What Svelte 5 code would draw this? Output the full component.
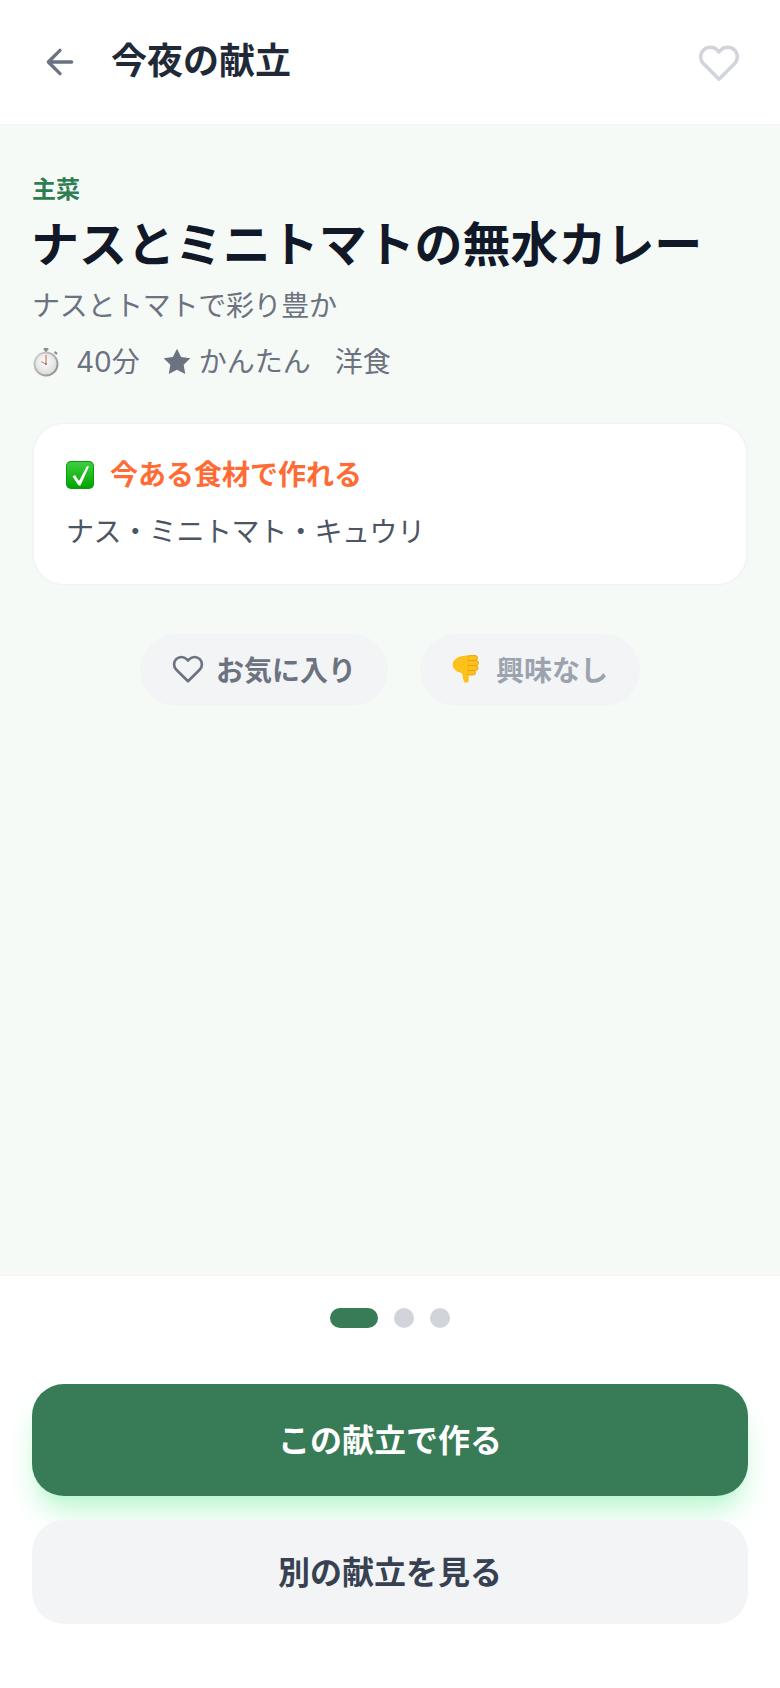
<script>
  const dots = [true, false, false];
</script>

<div class="page">
  <header class="top">
    <button class="icon-btn back" aria-label="戻る">
      <svg viewBox="0 0 24 24" width="40" height="40" class="arrow"><path d="M19 12H5M12 19l-7-7 7-7" /></svg>
    </button>
    <h1 class="top-title">今夜の献立</h1>
    <button class="icon-btn like" aria-label="お気に入り">
      <svg viewBox="0 0 24 24" width="42" height="42" class="heart-big"><path d="M20.84 4.61a5.5 5.5 0 0 0-7.78 0L12 5.67l-1.06-1.06a5.5 5.5 0 0 0-7.78 7.78l1.06 1.06L12 21.23l7.78-7.78 1.06-1.06a5.5 5.5 0 0 0 0-7.78z" /></svg>
    </button>
  </header>

  <main class="body">
    <div class="label">主菜</div>
    <h2 class="dish">ナスとミニトマトの無水カレー</h2>
    <p class="sub">ナスとトマトで彩り豊か</p>
    <div class="meta">
      <span class="meta-item">
        <svg class="watch" viewBox="0 0 28 32" width="28" height="32">
          <defs>
            <linearGradient id="wb" x1="0" y1="0" x2="1" y2="1"><stop offset="0" stop-color="#d8d8d8" /><stop offset="1" stop-color="#85888d" /></linearGradient>
            <radialGradient id="wf" cx="0.45" cy="0.4" r="0.7"><stop offset="0" stop-color="#ffffff" /><stop offset="1" stop-color="#d9d6d2" /></radialGradient>
          </defs>
          <rect x="11.5" y="2" width="5" height="2.600" rx="1" fill="#8a8d92" />
          <rect x="13" y="4" width="2" height="3" fill="#8a8d92" />
          <rect x="22" y="6" width="3.600" height="2.200" rx="1" fill="#8a8d92" transform="rotate(40 24 7)" />
          <circle cx="14" cy="18" r="12.500" fill="url(#wb)" />
          <circle cx="14" cy="18" r="10.500" fill="url(#wf)" />
          <path d="M14 18V9" stroke="#e2705c" stroke-width="1.200" />
          <path d="M14 18l-5-2.400" stroke="#8f8a85" stroke-width="1" />
          <circle cx="14" cy="18" r="1" fill="#8f6a60" />
        </svg>
        <span class="num">40分</span>
      </span>
      <span class="meta-item star-item">
        <svg viewBox="0 0 24 24" width="32" height="32" class="star"><path d="M12 2l3.090 6.260L22 9.270l-5 4.870 1.180 6.880L12 17.770l-6.180 3.250L7 14.140 2 9.270l6.910-1.010L12 2z" /></svg>
        <span>かんたん</span>
      </span>
      <span>洋食</span>
    </div>

    <section class="card">
      <div class="card-title">
        <svg viewBox="0 0 28 28" width="28" height="28">
          <defs>
            <linearGradient id="cb" x1="0" y1="0" x2="0" y2="1"><stop offset="0" stop-color="#3fcf3f" /><stop offset="1" stop-color="#00a400" /></linearGradient>
          </defs>
          <rect x="0" y="0" width="28" height="28" rx="5" fill="#0a9a12" />
          <rect x="1" y="1" width="26" height="26" rx="4.200" fill="url(#cb)" />
          <path d="M6.500 15.500L9 14l4 6L21 5l2 .5-8.500 19h-2z" fill="#fff" />
        </svg>
        <span>今ある食材で作れる</span>
      </div>
      <p class="card-text">ナス・ミニトマト・キュウリ</p>
    </section>

    <div class="actions">
      <button class="pill fav">
        <svg viewBox="0 0 24 24" width="32" height="32" class="heart-small"><path d="M20.84 4.61a5.5 5.5 0 0 0-7.78 0L12 5.67l-1.06-1.06a5.5 5.5 0 0 0-7.78 7.78l1.06 1.06L12 21.23l7.78-7.78 1.06-1.06a5.5 5.5 0 0 0 0-7.78z" /></svg>
        <span>お気に入り</span>
      </button>
      <button class="pill nope">
        <svg viewBox="0 0 28 30" width="28" height="30">
          <path d="M5 4C8 2 12 1.500 17 1.500V20h-.3v6c0 3-3.700 3.500-4.700 1.500-1-1.500-1-5.500-2-8-2-1.500-6-1.500-6.500-3.500C1 14.500 0 10 1 8.500 1.500 7 3 5 5 4z" fill="#fcc21b" />
          <g fill="#fcc21b" stroke="#e59a10" stroke-width=".8">
            <rect x="15.500" y="1.500" width="10" height="5" rx="2.300" />
            <rect x="15.500" y="6.500" width="11" height="5" rx="2.300" />
            <rect x="15.500" y="11.500" width="10.500" height="5" rx="2.300" />
            <rect x="15" y="16.500" width="8.500" height="4.500" rx="2.200" />
          </g>
          <path d="M14.500 2.500v17.500" stroke="#fcc21b" stroke-width="2.400" />
        </svg>
        <span>興味なし</span>
      </button>
    </div>
  </main>

  <footer class="foot">
    <div class="dots">
      {#each dots as on}
        <span class="dot" class:on></span>
      {/each}
    </div>
    <button class="cta primary">この献立で作る</button>
    <button class="cta secondary">別の献立を見る</button>
  </footer>
</div>

<style>
  :global(body) {
    margin: 0;
    background: #fff;
  }
  .page {
    width: 780px;
    height: 1688px;
    display: flex;
    flex-direction: column;
    font-family: "Inter", "Noto Sans CJK JP", sans-serif;
    box-sizing: border-box;
  }
  button {
    font-family: inherit;
    border: none;
    padding: 0;
    background: none;
  }
  .top {
    height: 125px;
    box-sizing: border-box;
    display: flex;
    align-items: center;
    padding: 0 40px 0 40px;
    background: #fff;
    border-bottom: 1px solid #f3f4f6;
  }
  .icon-btn {
    display: block;
  }
  .back {
    width: 40px;
    height: 40px;
  }
  .like {
    width: 42px;
    height: 42px;
    margin-top: 1px;
  }
  .icon-btn svg {
    display: block;
    fill: none;
    stroke-linecap: round;
    stroke-linejoin: round;
  }
  .arrow {
    stroke: #6b7280;
    stroke-width: 2;
  }
  .heart-big {
    stroke: #d1d5db;
    stroke-width: 2;
  }
  .top-title {
    flex: 1;
    margin: 0 0 0 31px;
    padding-bottom: 2px;
    font-size: 36px;
    line-height: 48px;
    font-weight: 700;
    color: #1f2937;
  }
  .body {
    flex: 1;
    background: #f6faf7;
    padding: 49px 32px 0;
  }
  .label {
    font-size: 24px;
    line-height: 32px;
    font-weight: 700;
    color: #2f7d52;
  }
  .dish {
    margin: 9px 0 0 -1px;
    font-size: 48px;
    line-height: 60px;
    font-weight: 700;
    color: #111827;
    letter-spacing: -0.05px;
  }
  .sub {
    margin: 11px 0 0;
    font-size: 28px;
    line-height: 40px;
    color: #6b7280;
    letter-spacing: -0.3px;
  }
  .meta {
    display: flex;
    align-items: center;
    gap: 24px;
    margin-top: 16px;
    font-size: 28px;
    line-height: 40px;
    color: #6b7280;
  }
  .meta-item {
    display: flex;
    align-items: center;
    gap: 16px;
  }
  .star-item {
    gap: 6px;
    margin-left: -3px;
  }
  .star {
    display: block;
    fill: #6b7280;
  }
  .watch {
    display: block;
  }
  .card {
    margin-top: 40px;
    background: #fff;
    border: 2px solid #f3f4f6;
    border-radius: 32px;
    padding: 31px 32px;
    height: 164px;
    box-sizing: border-box;
  }
  .card-title {
    display: flex;
    align-items: center;
    gap: 16px;
    font-size: 28px;
    line-height: 40px;
    font-weight: 700;
    color: #ff6b35;
  }
  .card-title svg {
    display: block;
  }
  .card-text {
    margin: 17px 0 0;
    font-size: 28px;
    line-height: 40px;
    color: #4b5563;
    letter-spacing: -0.4px;
  }
  .actions {
    display: flex;
    justify-content: center;
    gap: 32px;
    margin-top: 48px;
  }
  .pill {
    height: 72px;
    border-radius: 36px;
    background: #f3f4f6;
    display: flex;
    align-items: center;
    gap: 12px;
    padding: 0 32px 2px;
    font-size: 28px;
    font-weight: 700;
  }
  .pill svg {
    display: block;
  }
  .fav {
    color: #6b7280;
  }
  .nope {
    color: #9ca3af;
    gap: 16px;
  }
  .heart-small {
    fill: none;
    stroke: #6b7280;
    stroke-width: 2;
    stroke-linecap: round;
    stroke-linejoin: round;
  }
  .foot {
    background: #fff;
    border-top: 1px solid #f3f4f6;
    padding: 32px 32px 64px;
    display: flex;
    flex-direction: column;
    gap: 24px;
  }
  .dots {
    display: flex;
    justify-content: center;
    gap: 16px;
    margin-bottom: 32px;
  }
  .dot {
    width: 20px;
    height: 20px;
    border-radius: 10px;
    background: #d1d5db;
  }
  .dot.on {
    width: 48px;
    background: #387b57;
  }
  .cta {
    width: 100%;
    display: block;
    font-size: 32px;
    font-weight: 700;
    border-radius: 32px;
    padding-bottom: 4px;
  }
  .primary {
    height: 112px;
    background: #387b57;
    color: #fff;
    box-shadow: 0 20px 30px -6px #bbf7d0, 0 8px 12px -8px #bbf7d0;
  }
  .secondary {
    height: 104px;
    background: #f3f4f6;
    color: #374151;
  }
</style>
